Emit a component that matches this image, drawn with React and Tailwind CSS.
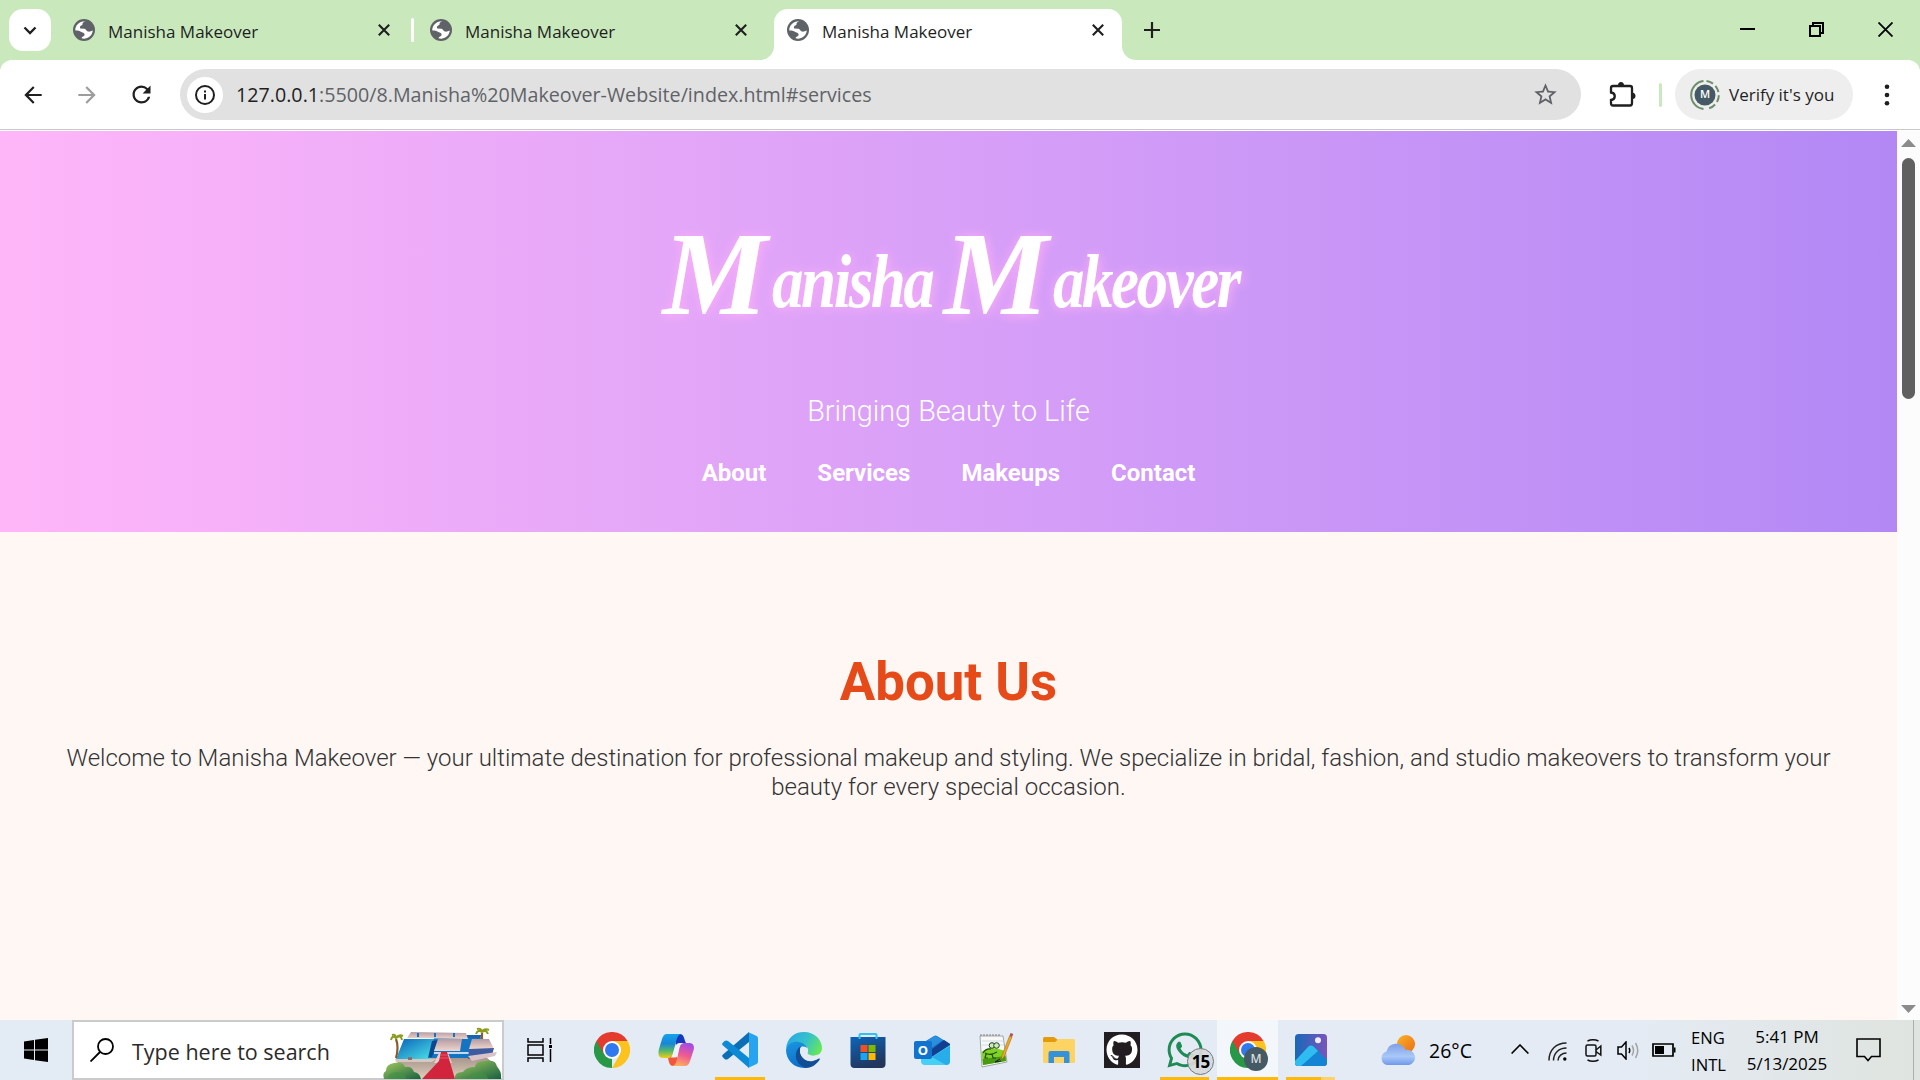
import { FaGithub, FaWhatsapp } from "react-icons/fa";
import { MdArrowBack, MdArrowForward, MdRefresh, MdStarBorder } from "react-icons/md";

function Globe() {
  return (
    <svg className="size-[22px] shrink-0" viewBox="0 0 22 22">
      <circle cx="11" cy="11" r="11" fill="#5f6368" />
      <path d="M12.6 2.3 C10 2.6 9.2 4.6 9.4 6 C7.4 6.4 6.4 8 7.2 9.6 L11.6 9.8 C13 10 13.2 12.2 15 12.6 C16.6 12.9 18 12.4 19.8 11.6 C19.4 16 16 19.3 11.6 19.7 C10.6 19.8 9.6 19.6 8.6 19.3 C9 17.4 11.6 17.6 11.6 15.6 C11.6 14 9.4 13.8 7.4 12.6 C5.4 11.4 4 11.4 2.3 11.6 C2 6.8 6 2 12.6 2.3 Z" fill="#fff" />
    </svg>
  );
}

function Cross({ className }) {
  return (
    <svg className={className} viewBox="0 0 12 12" fill="none" stroke="#1f1f1f" strokeWidth="2.1">
      <path d="M.8 .8 L11.2 11.2 M11.2 .8 L.8 11.2" />
    </svg>
  );
}

function Tab({ active, divider }) {
  return (
    <div className={active ? "relative flex h-full w-[348px] items-center rounded-t-[14px] bg-white pl-[13px]" : "relative flex h-full w-[357px] items-center pl-[13px]"}>
      {active && (
        <>
          <svg className="absolute bottom-0 -left-[14px] size-[14px]" viewBox="0 0 14 14"><path d="M14 0 A14 14 0 0 1 0 14 H14 Z" fill="#fff" /></svg>
          <svg className="absolute bottom-0 -right-[14px] size-[14px]" viewBox="0 0 14 14"><path d="M0 0 A14 14 0 0 0 14 14 H0 Z" fill="#fff" /></svg>
        </>
      )}
      <div className="-mt-[9px] flex w-full items-center">
        <Globe />
        <span className="ml-[13px] w-[270px] pt-[3px] text-[17px] leading-6 whitespace-nowrap text-[#1f1f1f]">Manisha Makeover</span>
        <Cross className="size-3 shrink-0" />
        {divider && <div className="ml-[21px] h-6 w-[3px] shrink-0 rounded bg-white" />}
      </div>
    </div>
  );
}

function ChromeIcon() {
  return (
    <svg className="size-9" viewBox="0 0 36 36">
      <path d="M18 18 L18 36 A18 18 0 0 1 2.4 9 Z" fill="#279847" />
      <path d="M18 9 H33.6 A18 18 0 0 1 18 36 L25.8 22.5 Z" fill="#fcc31e" />
      <path d="M2.4 9 L10.2 22.5 L18 18 L18 9 H33.6 A18 18 0 0 0 2.4 9 Z" fill="#e33b2e" />
      <circle cx="18" cy="18" r="9" fill="#fff" />
      <circle cx="18" cy="18" r="7" fill="#3079ef" />
    </svg>
  );
}

function CopilotIcon() {
  return (
    <svg className="size-9" viewBox="0 0 36 36">
      <defs>
        <linearGradient id="cpA" x1="0" y1="0" x2="0" y2="1"><stop offset="0" stopColor="#15a3ea" /><stop offset=".4" stopColor="#1787d8" /><stop offset=".7" stopColor="#55b76a" /><stop offset="1" stopColor="#f2cc14" /></linearGradient>
        <linearGradient id="cpB" x1="0.6" y1="0" x2=".3" y2="1"><stop offset="0" stopColor="#a34be6" /><stop offset=".5" stopColor="#ee5a92" /><stop offset="1" stopColor="#ffb05c" /></linearGradient>
      </defs>
      <path d="M17 2 H22 C25 2 26 5 27 9 L28 11 H23 C20 11 19 13 18 15 Z" fill="#1737bd" />
      <path d="M10 26 C11 31 12 34 15 34 C18 34 19 31 20 27 L18 24 H14 Z" fill="#f2573a" />
      <path d="M9 2 H24 C20 2 19 6 18 10 L15 21 C14 25 12 26 9 26 H5 C0 26 0 21 1 17 L4 7 C5 4 6 2 9 2 Z" fill="url(#cpA)" />
      <path d="M27 11 H31 C36 11 37 15 35 20 L32 29 C31 32 30 34 26 34 H14 C17 34 18 31 19 27 L21 18 C22 13 23 11 27 11 Z" fill="url(#cpB)" />
      <path d="M22 11 H24.500 C22 12 21.500 15 20.700 18 L19.300 24 Q18.500 25.500 16.500 25.500 H12.500 C14.500 24.500 15 22.500 15.500 20.500 L17.500 14 Q18.500 11 22 11 Z" fill="#eef3f9" />
    </svg>
  );
}

function CodeIcon() {
  return (
    <svg className="size-9" viewBox="0 0 36 36">
      <path d="M27 0 L27 10 L6 27 Q4 28 2.6 27 L.6 25 Q-.4 23.6 1 22.4 Z" fill="#0b6fb5" />
      <path d="M27 36 L27 26 L6 9 Q4 8 2.6 9 L.6 11 Q-.4 12.400 1 13.600 Z" fill="#0d8ad6" />
      <path d="M26 0 L34.600 4 Q36 4.800 36 6.200 V29.800 Q36 31.200 34.600 32 L26 36 Q27 35.500 27 34 V2 Q27 .6 26 0 Z" fill="#26a4f0" />
    </svg>
  );
}

function EdgeIcon() {
  return (
    <svg className="size-9" viewBox="0 0 36 36">
      <defs>
        <linearGradient id="edA" x1="0" y1=".2" x2="1" y2=".6"><stop offset="0" stopColor="#2aa6e8" /><stop offset=".55" stopColor="#35c3c8" /><stop offset="1" stopColor="#66e65a" /></linearGradient>
        <linearGradient id="edB" x1="0" y1="0" x2=".3" y2="1"><stop offset="0" stopColor="#1a97e0" /><stop offset="1" stopColor="#0f6fc9" /></linearGradient>
      </defs>
      <path d="M0 17 C1 6 8 0 18 0 C29 0 36 8 36 16 C36 21 32 24 27 24 C23 24 20 23 21 21 C23 19 22 15 19 13 C13 8 3 10 0 17 Z" fill="url(#edA)" />
      <path d="M0 18 C1 11 8 9 13 10 C18 11 21 14 21 16 C16 13 11 18 12 24 C13 31 19 35 22 35.600 C10 38 0 29 0 18 Z" fill="url(#edB)" />
      <path d="M15 14.600 C12 20 16 31 27 29 C30 28.500 31.500 27 33 26.600 C34 26.400 34 27 33.500 28 C30 33 25 36 20 36 C13 34 9 28 10 22 C10.400 18 13 15 15 14.600 Z" fill="#124e94" />
      <path d="M21 21 C19.500 24 22 27 27 27.200 C30 27.200 32 26 34 25 L32 22.500 C30 24 24 24.500 21 21 Z" fill="#e4ebf4" />
      <path d="M15 15 C18 13.500 22 16 22 19 C21.800 21 21 21.500 21.500 23 C22 25 23 27 27 29 C20 30 14 24 14 19 C14 17 14.400 15.600 15 15 Z" fill="#e4ebf4" />
    </svg>
  );
}

function StoreIcon() {
  return (
    <svg className="size-9" viewBox="0 0 36 36">
      <defs><linearGradient id="stA" x1="0" y1="0" x2=".4" y2="1"><stop offset="0" stopColor="#0d65ba" /><stop offset="1" stopColor="#21355d" /></linearGradient></defs>
      <path d="M.5 5 H35.500 V32 Q35.500 36 31.500 36 H4.500 Q.5 36 .5 32 Z" fill="url(#stA)" />
      <path d="M9.500 7 V3 Q9.500 2 10.500 2 H25.500 Q26.500 2 26.500 3 V7" fill="none" stroke="#35c1f0" strokeWidth="2" />
      <path d="M10.500 13 h7 v7 h-7z" fill="#f25022" /><path d="M18.500 13 h7 v7 h-7z" fill="#7fba00" />
      <path d="M10.500 21 h7 v7 h-7z" fill="#1ba5ef" /><path d="M18.500 21 h7 v7 h-7z" fill="#ffb900" />
    </svg>
  );
}

function OutlookIcon() {
  return (
    <span className="relative block size-9">
      <svg className="size-9" viewBox="0 0 36 36">
        <path d="M7 12 L20 4 Q21.500 3 23 4 L36 12 V18 L20 26 L7 20 Z" fill="#1d76cf" />
        <path d="M11 10 L21 4 L29 8 L17 16 Z" fill="#2b90dc" />
        <path d="M18 17 L30 8 L36 12 V14 L18 25 Z" fill="#123f8f" />
        <path d="M36 13 V29 Q36 33 32 33 H11 Q7 33 7 29 V26 H16 Z" fill="#45d0f6" />
        <path d="M36 14 V29 Q36 33 32 33 L18 25 Z" fill="#27aeea" />
        <rect y="9" width="18" height="18" rx="2" fill="#1273cf" />
      </svg>
      <b className="absolute top-[9px] left-0 w-[18px] text-center text-[13px] leading-[18px] text-white">O</b>
    </span>
  );
}

function NotepadIcon() {
  return (
    <svg className="size-9" viewBox="0 0 36 36">
      <path d="M2 4 L25 4 L29 30 L4 35 Z" fill="#f7f8f7" stroke="#8d9494" strokeWidth=".8" />
      <path d="M4 9 H26 M4 13 H26" stroke="#c3d8e6" strokeWidth=".8" />
      <path d="M3.500 20 Q13 13 27 19 L28 29 L5 33 Z" fill="#7fd321" />
      <path d="M4.500 27 L27.500 24 L28 29 L5 33 Z" fill="#489a15" />
      <path d="M5 21 Q8 16 13 17 M7 21 Q12 24 19 20 M8 22 L7 26 H10 M14 22 L15 26 H18" fill="none" stroke="#244b1b" strokeWidth="1.200" />
      <circle cx="14" cy="13.500" r="2.800" fill="#c9ecb5" stroke="#263c20" strokeWidth="1" />
      <circle cx="18.500" cy="13.500" r="2.800" fill="#c9ecb5" stroke="#263c20" strokeWidth="1" />
      <path d="M3 4 V2 M6 4 V2 M9 4 V2 M12 4 V2 M15 4 V2 M18 4 V2 M21 4 V2" stroke="#777" strokeWidth=".9" />
      <path d="M31.500 4 L34 5 L26 25 L23.500 27.500 L23.700 24 Z" fill="#eea61f" stroke="#9c6417" strokeWidth=".5" />
      <path d="M32.500 1 L35.300 2 L34 5 L31.500 4 Z" fill="#b3504c" />
      <path d="M22 27 L17 30 L23 29" fill="none" stroke="#222" />
    </svg>
  );
}

function FolderIcon() {
  return (
    <svg className="size-9" viewBox="0 0 36 36">
      <path d="M2 6.500 Q2 5 3.500 5 H13 L17 8 V12 H2 Z" fill="#e39b09" />
      <path d="M2 10 H14 L17.500 7 H32.500 Q34 7 34 8.500 V29.500 Q34 31 32.500 31 H3.500 Q2 31 2 29.500 Z" fill="#fdd363" />
      <path d="M7.500 31 V21 Q7.500 19 9.500 19 H26.500 Q28.500 19 28.500 21 V31 H23 V25 H13 V31 Z" fill="#3591d9" />
    </svg>
  );
}

function PhotosIcon() {
  return (
    <svg className="size-9" viewBox="0 0 36 36">
      <defs><linearGradient id="phA" x1="0" y1="0" x2="1" y2="0"><stop offset="0" stopColor="#1769b8" /><stop offset="1" stopColor="#7a54bc" /></linearGradient></defs>
      <rect x="2" y="2" width="32" height="32" rx="3.500" fill="url(#phA)" />
      <path d="M2 29 L15.500 14.500 Q18 12.500 20.500 14.500 L34 28 V30.500 Q34 34 30.500 34 H5.500 Q2 34 2 30.500 Z" fill="#1583d3" />
      <path d="M2 29 L15.500 14.500 Q18 12.500 20.500 14.500 L25 19 L8 34 H5.500 Q2 34 2 30.500 Z" fill="#2fbdf1" />
      <circle cx="25" cy="8.300" r="3" fill="#f2ecfa" />
    </svg>
  );
}

function Villa() {
  return (
    <svg className="h-[56px] w-[122px]" viewBox="-4 0 122 56">
      <defs>
        <linearGradient id="vA" x1="0" y1="0" x2="1" y2="1"><stop offset="0" stopColor="#0b62b8" /><stop offset="1" stopColor="#4be6ea" /></linearGradient>
        <linearGradient id="vB" x1="0" y1="0" x2="0" y2="1"><stop offset="0" stopColor="#a59388" /><stop offset="1" stopColor="#e0d0bf" /></linearGradient>
        <linearGradient id="vC" x1="0" y1="0" x2="0" y2="1"><stop offset="0" stopColor="#b39ba5" /><stop offset="1" stopColor="#f0d6cb" /></linearGradient>
        <linearGradient id="vD" x1="0" y1="0" x2="1" y2="1"><stop offset="0" stopColor="#9fc95c" /><stop offset="1" stopColor="#176141" /></linearGradient>
      </defs>
      <path d="M14 36 L102 34 L114 44 V56 H12 Z" fill="url(#vB)" />
      <path d="M82 12 L97 12 L95 34 H62 V15 Z" fill="#1565ae" />
      <path d="M20 16 H51 L46 36 H12 Z" fill="url(#vA)" />
      <path d="M50 15 H97 L84 35 H46 Z" fill="#1474c2" />
      <path d="M48 18 L54 17 L48 34 L44 35 Z" fill="#0a4890" />
      <path d="M27 9 L82 10 L84 16 L23 15 Z" fill="url(#vC)" />
      <path d="M54 16 H78 L76 28 H50 Z" fill="url(#vC)" />
      <path d="M50 29 H86 V31 H50 Z" fill="#c3d9ee" />
      <path d="M88 16 H105 L110 26 H85 Z" fill="url(#vC)" />
      <path d="M85 26 L110 25 L108 32 L84 36 Z" fill="#3d5b9e" />
      <path d="M84 33 L113 29 L111 33 L88 38 Z" fill="#d9c2c8" />
      <path d="M34 10 v4 M51 10 v4 M70 10 v4" stroke="#1474c2" strokeWidth="2" />
      <path d="M11 36 L44 36 L52 36 L48 39 H12 Z" fill="#d8c7c0" />
      <path d="M24 37 v-3 h4 v3" fill="#8b6f66" />
      <path d="M55 30 H64 L68 40 H50 Z" fill="#e6cfc9" />
      <path d="M57 29 H63 L71 56 H38 L55 38 Z" fill="#d2253d" />
      <path d="M56 32 H64 M56 35 H65" stroke="#e4576a" strokeWidth="1" />
      <path d="M12 16 Q15 24 12 35 M98 10 V16" fill="none" stroke="#8a5c2a" strokeWidth="2.200" />
      <path d="M7 17 Q8 12 12 15 Q17 11 18 17 M8 12 Q12 11 12 15 Q15 11 19 13" fill="none" stroke="#8c9c1f" strokeWidth="2" />
      <path d="M92 11 Q94 6 98 9 Q102 6 104 11 M93 6 Q98 5 98 9 Q100 5 105 7" fill="none" stroke="#8c9c1f" strokeWidth="2" />
      <path d="M0 56 Q-2 50 2 48 Q2 41 10 40 Q19 38 21 44 Q28 43 30 49 Q36 50 37 56 Z" fill="url(#vD)" />
      <path d="M71 56 Q70 49 79 49 Q82 44 91 44 Q91 38 101 38 Q112 36 113 44 Q118 48 117 56 Z" fill="url(#vD)" />
      <path d="M4 56 Q4 49 13 49 Q22 49 22 56 Z M84 56 Q84 50 94 50 Q104 50 104 56 Z" fill="#3f9246" opacity=".6" />
    </svg>
  );
}

function Slot({ children, wide }) {
  return <div className={wide ? "relative flex h-full w-16 items-center justify-center" : "relative flex h-full w-[63px] items-center justify-center"}>{children}</div>;
}

function ScriptWord({ rest, className }) {
  return (
    <span className={className}>
      <span className="mr-[5px] translate-y-[7px] text-[118px]">M</span>
      <span className="origin-left scale-x-[0.83] text-[76px] tracking-[-3px]">{rest}</span>
    </span>
  );
}

export default function App() {
  return (
    <div className="flex h-[1080px] w-[1920px] flex-col overflow-hidden bg-white font-['Open_Sans',sans-serif] text-[#1f1f1f]">
      {/* Tab strip */}
      <div className="h-[60px] shrink-0 bg-[#c9e9bd]">
        <div className="flex h-full pt-[9px]">
          <div className="ml-[9px] flex size-[42px] items-center justify-center rounded-[14px] bg-white">
            <svg className="size-[14px]" viewBox="0 0 14 14" fill="none" stroke="#1f1f1f" strokeWidth="2.300"><path d="M1.500 4.500 L7 10 L12.500 4.500" /></svg>
          </div>
          <div className="ml-[9px] flex">
            <Tab divider />
            <Tab />
            <Tab active />
          </div>
          <svg className="mt-[13px] ml-[22px] size-4" viewBox="0 0 16 16" stroke="#1f1f1f" strokeWidth="2.200"><path d="M8 0 V16 M0 8 H16" /></svg>
          <div className="mt-[13px] mr-[27px] ml-auto flex items-center gap-[54px] self-start">
            <svg className="size-[15px]" viewBox="0 0 15 15"><path d="M0 6 H15 V8 H0 Z" /></svg>
            <svg className="size-[15px]" viewBox="0 0 15 15" fill="none" stroke="#000" strokeWidth="2"><path d="M1 4 H11 V14 H1 Z M4 4 V1 H14 V11 H11" /></svg>
            <svg className="size-[15px]" viewBox="0 0 15 15" stroke="#000" strokeWidth="1.800"><path d="M.5 .5 L14.500 14.500 M14.500 .5 L.5 14.500" /></svg>
          </div>
        </div>
      </div>

      {/* Toolbar */}
      <div className="h-[71px] shrink-0 bg-[#c9e9bd]">
        <div className="flex h-full items-center rounded-t-[12px] bg-white pb-[2px] shadow-[inset_0_-1px_0_#fff,inset_0_-2px_0_#c7cac7]">
          <MdArrowBack className="ml-[20px] size-[26px]" />
          <MdArrowForward className="ml-[28px] size-[26px] text-[#9d9d9d]" />
          <MdRefresh className="ml-[28px] size-[27px]" />
          <div className="ml-[25px] flex h-[51px] w-[1401px] items-center rounded-full bg-[#e1e1e1] pr-[22px] pl-[7px]">
            <div className="flex size-9 items-center justify-center rounded-full bg-white">
              <svg className="size-5" viewBox="0 0 20 20" fill="none" stroke="#1f1f1f" strokeWidth="2"><circle cx="10" cy="10" r="9" /><path d="M10 9 V14.500 M10 5.500 V7.500" /></svg>
            </div>
            <span className="ml-[13px] text-[19.700px] leading-7 whitespace-nowrap text-[#5f6368]"><span className="text-[#1f1f1f]">127.0.0.1</span>:5500/8.Manisha%20Makeover-Website/index.html#services</span>
            <MdStarBorder className="ml-auto size-[27px] text-[#5f6368]" />
          </div>
          <svg className="ml-[28px] size-[27px]" viewBox="0 0 27 27">
            <path d="M4 5 H21 Q23 5 23 7 V22 Q23 24.500 21 24.500 H4 Q2 24.500 2 22.500 V19 C7 18.500 7 12 2 11.500 V7 Q2 5 4 5 Z" fill="none" stroke="#1f1f1f" strokeWidth="2.300" />
            <path d="M9 4.500 Q9 1 12 1 Q15 1 15 4.500 Z M23.500 11.500 Q26.500 12 26.500 15 Q26.500 18 23.500 18 Z" fill="#1f1f1f" />
          </svg>
          <div className="ml-[23px] h-6 w-[3px] rounded bg-[#c9e9bd]" />
          <div className="ml-[13px] flex h-[51px] w-[178px] items-center rounded-full bg-[#eeeeee] pl-[15px]">
            <div className="relative flex size-[30px] shrink-0 items-center justify-center">
              <svg className="absolute inset-0 size-[30px]" viewBox="0 0 30 30">
                <path d="M13.500 1.100 A14 14 0 0 0 13.500 28.900" fill="none" stroke="#6a8f68" strokeWidth="2" />
                <path d="M16.500 1.100 A14 14 0 0 1 16.500 28.900" fill="none" stroke="#6a8f68" strokeWidth="2" strokeDasharray="7 3.200" />
                <circle cx="15" cy="15" r="10.500" fill="#455a64" />
              </svg>
              <span className="relative text-[11px] font-semibold text-white">M</span>
            </div>
            <span className="ml-[9px] text-[17px] leading-6 whitespace-nowrap">Verify it's you</span>
          </div>
          <svg className="ml-[31px] h-[22px] w-[6px]" viewBox="0 0 6 22" fill="#1f1f1f"><circle cx="3" cy="2.700" r="2.300" /><circle cx="3" cy="11" r="2.300" /><circle cx="3" cy="19.300" r="2.300" /></svg>
        </div>
      </div>

      {/* Page */}
      <div className="flex h-[889px] shrink-0">
        <main className="w-[1897px] bg-[#fff7f3] font-['Roboto',sans-serif]">
          <header className="flex h-[401px] flex-col items-center bg-linear-to-r from-[#ffb6f9] to-[#b388f5] text-white">
            <h1 className="mt-[77px] ml-[8px] flex h-[120px] w-[580px] font-['Liberation_Serif',serif] leading-[120px] font-bold whitespace-nowrap italic [text-shadow:1px_1px_12px_#ffb0f8]">
              <ScriptWord rest="anisha" className="flex w-[281px] items-baseline" />
              <ScriptWord rest="akeover" className="flex w-[299px] items-baseline" />
            </h1>
            <p className="mt-[66px] text-[28.800px] leading-[34px] font-light">Bringing Beauty to Life</p>
            <nav className="mt-[31px] flex gap-[51px] text-[24px] leading-7 font-bold">
              <a>About</a>
              <a>Services</a>
              <a>Makeups</a>
              <a>Contact</a>
            </nav>
          </header>
          <section className="flex flex-col items-center pt-[119px] text-center">
            <h2 className="text-[52.800px] leading-[62px] font-bold text-[#e64a19]">About Us</h2>
            <p className="mt-[31px] text-[24px] leading-[29px] font-light text-[#333]">
              Welcome to Manisha Makeover — your ultimate destination for professional makeup and styling. We specialize in bridal, fashion, and studio makeovers to transform your<br />beauty for every special occasion.
            </p>
          </section>
        </main>
        <div className="flex w-[23px] flex-col items-center bg-[#fcfcfc]">
          <svg className="mt-[8px] h-[8px] w-[15px]" viewBox="0 0 15 8" fill="#8b8b8b"><path d="M0 8 L7.500 0 L15 8 Z" /></svg>
          <div className="mt-[11px] h-[241px] w-[13px] rounded-full bg-[#606060]" />
          <svg className="mt-auto mb-[7px] h-[8px] w-[15px]" viewBox="0 0 15 8" fill="#8b8b8b"><path d="M0 0 L7.500 8 L15 0 Z" /></svg>
        </div>
      </div>

      {/* Taskbar */}
      <div className="flex h-[60px] shrink-0 items-center bg-linear-to-r from-[#e3ebf4] via-[#e4ebf4] via-85% to-[#dfe4df] text-black">
        <div className="flex w-[72px] justify-center">
          <svg className="size-6" viewBox="0 0 24 24"><path d="M0 3.400 L10 2 V11.400 H0 Z M11 1.800 L24 0 V11.400 H11 Z M0 12.400 H10 V22 L0 20.600 Z M11 12.400 H24 V24 L11 22.200 Z" /></svg>
        </div>
        <div className="flex h-[60px] w-[432px] items-center border-2 border-[#cbcbcb] bg-white pl-[16px]">
          <svg className="size-6" viewBox="0 0 24 24" fill="none" stroke="#000" strokeWidth="1.800"><circle cx="15.500" cy="8.500" r="7.500" /><path d="M10 14 L.5 23.500" /></svg>
          <span className="ml-[18px] pt-[3px] text-[21.500px] leading-7 whitespace-nowrap text-[#2b2b2b]">Type here to search</span>
          <div className="mt-px ml-auto"><Villa /></div>
        </div>
        <div className="flex w-[76px] pl-[23px]">
          <svg className="h-6 w-[26px]" viewBox="0 0 26 24" fill="none" stroke="#000" strokeWidth="1.500"><path d="M1 0 V4 H16 V0 M1 7 H16 V17 H1 Z M1 24 V20 H16 V24 M23.500 0 V6 M23.500 11 V24" /><path d="M22 7 h3 v3 h-3z" fill="#000" stroke="none" /></svg>
        </div>
        <div className="flex h-full">
          <Slot wide><ChromeIcon /></Slot>
          <Slot wide><CopilotIcon /></Slot>
          <Slot wide><CodeIcon /><div className="absolute bottom-0 left-[7px] h-[3px] w-[50px] bg-[#fcb80c]" /></Slot>
          <Slot wide><EdgeIcon /></Slot>
          <Slot wide><StoreIcon /></Slot>
          <Slot wide><OutlookIcon /></Slot>
          <Slot><NotepadIcon /></Slot>
          <Slot><FolderIcon /></Slot>
          <Slot><div className="flex size-9 items-center justify-center bg-[#211d20]"><FaGithub className="size-[32px] text-white" /></div></Slot>
          <Slot>
            <FaWhatsapp className="size-[40px] text-[#1e8b55]" />
            <div className="absolute top-[28px] left-[34px] flex size-[27px] items-center justify-center rounded-full border border-[#777] bg-[#d6d9dcee] text-[17px] leading-none font-bold tracking-[-1px]">15</div>
            <div className="absolute bottom-0 left-[7px] h-[3px] w-[49px] bg-[#fcb80c]" />
          </Slot>
          <Slot>
            <div className="absolute inset-y-0 left-px w-[61px] border-b-[3px] border-[#fcb80c] bg-[#f3f7fb]" />
            <div className="relative"><ChromeIcon /></div>
            <div className="absolute top-[27px] left-[28px] flex size-6 items-center justify-center rounded-full bg-[#455a64] text-[12px] leading-none font-semibold text-[#d5dade]">M</div>
          </Slot>
          <Slot>
            <PhotosIcon />
            <div className="absolute bottom-0 left-[7px] flex h-[3px] w-[49px] bg-[#fdd26a]"><div className="w-[35px] bg-[#fcb80c]" /></div>
          </Slot>
        </div>

        <div className="ml-[38px] flex items-center">
          <svg className="h-[30px] w-9" viewBox="0 0 36 30">
            <defs>
              <linearGradient id="wxA" x1="0" y1="0" x2="0" y2="1"><stop offset="0" stopColor="#7f9fe6" /><stop offset=".6" stopColor="#a9c8f8" /><stop offset="1" stopColor="#6f98ea" /></linearGradient>
              <linearGradient id="wxB" x1="0" y1="0" x2="1" y2="1"><stop offset="0" stopColor="#f7b32a" /><stop offset="1" stopColor="#ee6b13" /></linearGradient>
            </defs>
            <circle cx="26" cy="9" r="9" fill="url(#wxB)" />
            <path d="M7 30 A7 7 0 0 1 6.500 16.500 A10 10 0 0 1 25.500 15 A7.500 7.500 0 0 1 29 30 Z" fill="url(#wxA)" />
          </svg>
          <span className="ml-[13px] w-[82px] pt-[2px] text-[19.500px] leading-6">26°C</span>
          <svg className="mt-[-2px] h-[10px] w-[18px]" viewBox="0 0 18 10" fill="none" stroke="#000" strokeWidth="1.600"><path d="M.6 9.500 L9 1 L17.400 9.500" /></svg>
          <svg className="mt-[2px] ml-[19px] h-[19px] w-[19px]" viewBox="0 0 19 19" fill="none" stroke="#222" strokeWidth="1.500"><path d="M1 18.500 C1 8 8 1 18.500 1 M5.500 18.500 C5.500 11 11 6 18.500 6 M10 18.500 C10 14 14 11 18.500 11" /><circle cx="16.800" cy="17" r="1.700" fill="#000" stroke="none" /></svg>
          <svg className="ml-[18px] h-[23px] w-[17px]" viewBox="0 0 17 23" fill="none" stroke="#111" strokeWidth="1.500"><rect x="1" y="6" width="10" height="11" rx="1.500" /><path d="M11 11 L15.800 7 V16 L11 12.500 M2.500 2 Q8 -.5 13.500 2 M2.500 21 Q8 23.500 13.500 21" /></svg>
          <svg className="ml-[15px] h-[19px] w-[23px]" viewBox="0 0 23 19" fill="none" strokeWidth="1.500"><path d="M1 6 H4.500 L9 1 V18 L4.500 13 H1 Z M12 7 Q13.500 9.500 12 12" stroke="#000" /><path d="M15 4.500 Q18 9.500 15 14.500 M18.500 2 Q23 9.500 18.500 17" stroke="#a0a4a8" /></svg>
          <svg className="ml-[12px] h-[14px] w-6" viewBox="0 0 24 14"><path d="M1 1 H21 V13 H1 Z" fill="none" stroke="#000" strokeWidth="1.700" /><path d="M3 3 H12 V11 H3 Z M22 4.500 H23.500 V9.500 H22 Z" /></svg>
          <div className="ml-[15px] w-[34px] pt-px text-[16.600px] leading-[27px] whitespace-nowrap"><div>ENG</div><div>INTL</div></div>
          <div className="ml-[21px] w-[82px] text-center text-[17px] leading-[27px] whitespace-nowrap"><div>5:41 PM</div><div>5/13/2025</div></div>
          <svg className="ml-[28px] h-6 w-[25px]" viewBox="0 0 25 24" fill="none" stroke="#000" strokeWidth="1.600"><path d="M1 1 H24 V18.500 H15.500 L12 22.500 L8.500 18.500 H1 Z" /></svg>
        </div>
        <div className="mr-[6px] ml-auto h-full w-px bg-[#aab0ae]" />
      </div>
    </div>
  );
}
